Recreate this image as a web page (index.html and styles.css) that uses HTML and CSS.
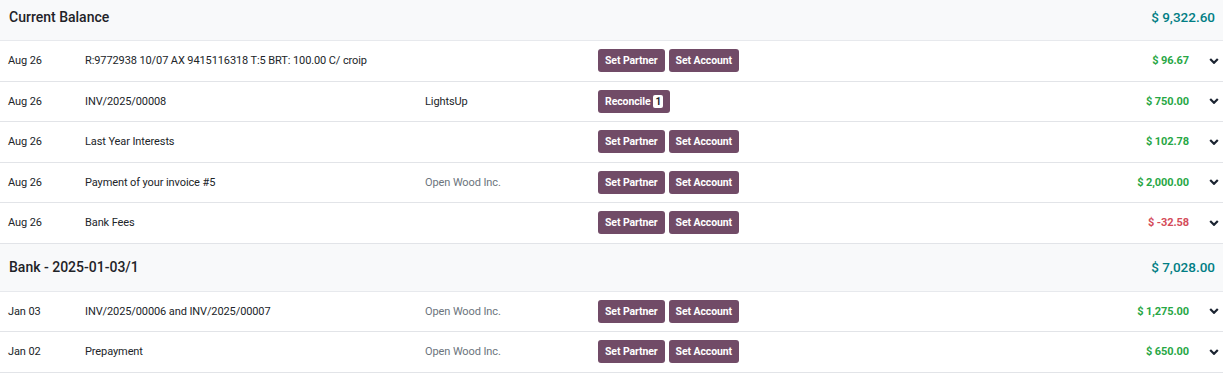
FILE: index.html
```html
<!DOCTYPE html>
<html lang="en">
<head>
    <meta charset="UTF-8">
    <title>Bank Reconciliation</title>
    <link rel="stylesheet" href="styles.css">
</head>
<body>
    <div class="statement">
        <div class="statement-header first">
            <span class="statement-title">Current Balance</span>
            <span class="statement-balance">$ 9,322.60</span>
        </div>

        <div class="line">
            <span class="line-date">Aug 26</span>
            <span class="line-label">R:9772938 10/07 AX 9415116318 T:5 BRT: 100.00 C/ croip</span>
            <span class="line-partner"></span>
            <span class="line-actions">
                <button class="btn">Set Partner</button>
                <button class="btn">Set Account</button>
            </span>
            <span class="line-amount">$ 96.67</span>
            <span class="line-toggle"><svg viewBox="0 0 10 6"><polyline points="1.2,1 5,4.8 8.8,1"/></svg></span>
        </div>

        <div class="line">
            <span class="line-date">Aug 26</span>
            <span class="line-label">INV/2025/00008</span>
            <span class="line-partner dark">LightsUp</span>
            <span class="line-actions">
                <button class="btn">Reconcile <span class="badge">1</span></button>
            </span>
            <span class="line-amount">$ 750.00</span>
            <span class="line-toggle"><svg viewBox="0 0 10 6"><polyline points="1.2,1 5,4.8 8.8,1"/></svg></span>
        </div>

        <div class="line">
            <span class="line-date">Aug 26</span>
            <span class="line-label">Last Year Interests</span>
            <span class="line-partner"></span>
            <span class="line-actions">
                <button class="btn">Set Partner</button>
                <button class="btn">Set Account</button>
            </span>
            <span class="line-amount">$ 102.78</span>
            <span class="line-toggle"><svg viewBox="0 0 10 6"><polyline points="1.2,1 5,4.8 8.8,1"/></svg></span>
        </div>

        <div class="line">
            <span class="line-date">Aug 26</span>
            <span class="line-label">Payment of your invoice #5</span>
            <span class="line-partner">Open Wood Inc.</span>
            <span class="line-actions">
                <button class="btn">Set Partner</button>
                <button class="btn">Set Account</button>
            </span>
            <span class="line-amount">$ 2,000.00</span>
            <span class="line-toggle"><svg viewBox="0 0 10 6"><polyline points="1.2,1 5,4.8 8.8,1"/></svg></span>
        </div>

        <div class="line">
            <span class="line-date">Aug 26</span>
            <span class="line-label">Bank Fees</span>
            <span class="line-partner"></span>
            <span class="line-actions">
                <button class="btn">Set Partner</button>
                <button class="btn">Set Account</button>
            </span>
            <span class="line-amount negative">$ -32.58</span>
            <span class="line-toggle"><svg viewBox="0 0 10 6"><polyline points="1.2,1 5,4.8 8.8,1"/></svg></span>
        </div>

        <div class="statement-header">
            <span class="statement-title medium">Bank - 2025-01-03/1</span>
            <span class="statement-balance">$ 7,028.00</span>
        </div>

        <div class="line">
            <span class="line-date">Jan 03</span>
            <span class="line-label">INV/2025/00006 and INV/2025/00007</span>
            <span class="line-partner">Open Wood Inc.</span>
            <span class="line-actions">
                <button class="btn">Set Partner</button>
                <button class="btn">Set Account</button>
            </span>
            <span class="line-amount">$ 1,275.00</span>
            <span class="line-toggle"><svg viewBox="0 0 10 6"><polyline points="1.2,1 5,4.8 8.8,1"/></svg></span>
        </div>

        <div class="line">
            <span class="line-date">Jan 02</span>
            <span class="line-label">Prepayment</span>
            <span class="line-partner">Open Wood Inc.</span>
            <span class="line-actions">
                <button class="btn">Set Partner</button>
                <button class="btn">Set Account</button>
            </span>
            <span class="line-amount">$ 650.00</span>
            <span class="line-toggle"><svg viewBox="0 0 10 6"><polyline points="1.2,1 5,4.8 8.8,1"/></svg></span>
        </div>
    </div>
</body>
</html>
```

FILE: styles.css
```css
* {
    margin: 0;
    padding: 0;
    box-sizing: border-box;
}

body {
    font-family: 'Roboto', 'Liberation Sans', sans-serif;
    font-size: 11px;
    letter-spacing: -0.1px;
    color: #212529;
    background: #fff;
}

.statement-header {
    display: flex;
    align-items: center;
    justify-content: space-between;
    height: 48px;
    padding: 0 8px 0 9px;
    background: #f8f9fa;
    border-bottom: 1px solid #e7e9ed;
}

.statement-header.first {
    height: 41px;
    padding-bottom: 7px;
}

.statement-title {
    font-size: 14px;
    font-weight: 500;
    color: #1f2328;
    letter-spacing: 0;
}

.statement-balance {
    font-size: 13.5px;
    font-weight: 500;
    color: #017e84;
    letter-spacing: 0;
}

.line {
    display: grid;
    grid-template-columns: 77px 340px 173px 1fr auto 34px;
    align-items: center;
    height: 40.5px;
    padding-left: 8px;
    border-bottom: 1px solid #e2e4e8;
}

.line-partner {
    color: #6c757d;
}

.line-partner.dark {
    color: #212529;
}

.line-actions {
    display: flex;
    gap: 4px;
}

.btn {
    display: inline-flex;
    align-items: center;
    gap: 3px;
    height: 23px;
    padding: 0 7px;
    background: #714b67;
    color: #fff;
    border: none;
    border-radius: 3px;
    font-family: inherit;
    font-size: 10.5px;
    font-weight: 700;
    letter-spacing: -0.1px;
}

.badge {
    display: inline-block;
    min-width: 9px;
    height: 13px;
    line-height: 13px;
    padding: 0 2px;
    background: #fff;
    color: #1f2328;
    border-radius: 2px;
    font-size: 10px;
    text-align: center;
}

.line-amount {
    font-weight: 700;
    color: #28a745;
    text-align: right;
}

.line-amount.negative {
    color: #d44c59;
}

.line-toggle {
    display: flex;
    justify-content: flex-end;
    padding-right: 4px;
}

.line-toggle svg {
    width: 10px;
    height: 6px;
    fill: none;
    stroke: #1b2431;
    stroke-width: 2.2;
}
```
